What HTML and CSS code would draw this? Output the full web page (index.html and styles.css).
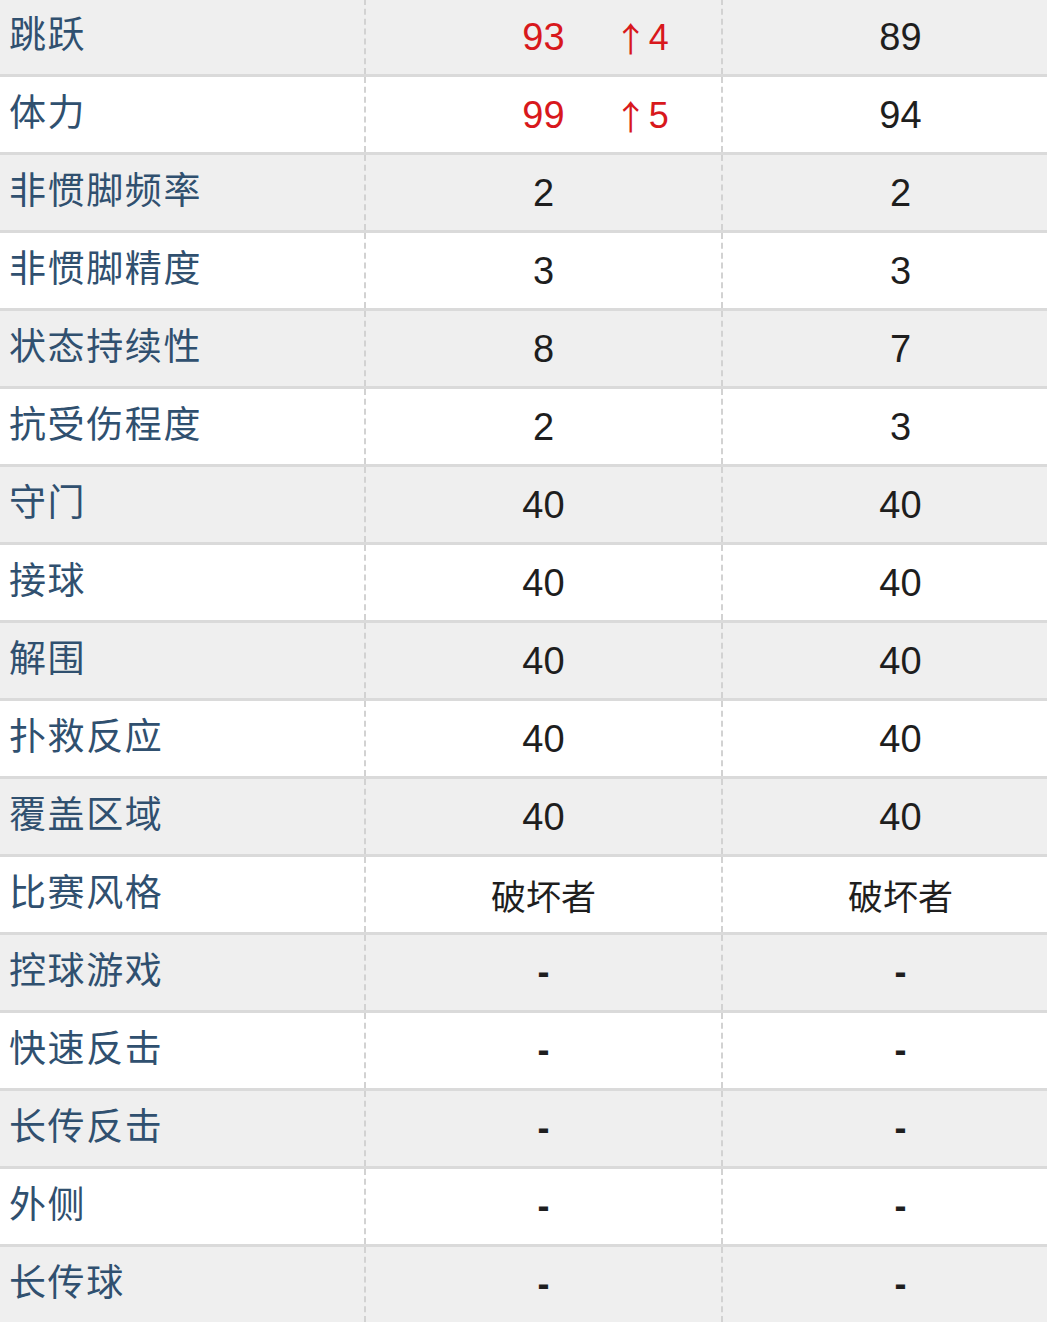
FILE: index.html
```html
<!DOCTYPE html>
<html lang="zh-CN">
<head>
<meta charset="utf-8">
<title>球员属性对比</title>
<link rel="stylesheet" href="styles.css">
</head>
<body>
<div class="table">
  <div class="row gray"><div class="label">跳跃</div><div class="val up"><span></span><span class="num red">93</span><span class="delta"><span class="arrow">↑</span>4</span></div><div class="val">89</div></div>
  <div class="row"><div class="label">体力</div><div class="val up"><span></span><span class="num red">99</span><span class="delta"><span class="arrow">↑</span>5</span></div><div class="val">94</div></div>
  <div class="row gray"><div class="label">非惯脚频率</div><div class="val">2</div><div class="val">2</div></div>
  <div class="row"><div class="label">非惯脚精度</div><div class="val">3</div><div class="val">3</div></div>
  <div class="row gray"><div class="label">状态持续性</div><div class="val">8</div><div class="val">7</div></div>
  <div class="row"><div class="label">抗受伤程度</div><div class="val">2</div><div class="val">3</div></div>
  <div class="row gray"><div class="label">守门</div><div class="val">40</div><div class="val">40</div></div>
  <div class="row"><div class="label">接球</div><div class="val">40</div><div class="val">40</div></div>
  <div class="row gray"><div class="label">解围</div><div class="val">40</div><div class="val">40</div></div>
  <div class="row"><div class="label">扑救反应</div><div class="val">40</div><div class="val">40</div></div>
  <div class="row gray"><div class="label">覆盖区域</div><div class="val">40</div><div class="val">40</div></div>
  <div class="row"><div class="label">比赛风格</div><div class="val cjk">破坏者</div><div class="val cjk">破坏者</div></div>
  <div class="row gray"><div class="label">控球游戏</div><div class="val dash">-</div><div class="val dash">-</div></div>
  <div class="row"><div class="label">快速反击</div><div class="val dash">-</div><div class="val dash">-</div></div>
  <div class="row gray"><div class="label">长传反击</div><div class="val dash">-</div><div class="val dash">-</div></div>
  <div class="row"><div class="label">外侧</div><div class="val dash">-</div><div class="val dash">-</div></div>
  <div class="row gray"><div class="label">长传球</div><div class="val dash">-</div><div class="val dash">-</div></div>
</div>
</body>
</html>
```
FILE: styles.css
```css
html, body {
  margin: 0;
  padding: 0;
  background: #ffffff;
  overflow: hidden;
}
body {
  width: 1047px;
  height: 1322px;
  font-family: "Liberation Sans", "Noto Sans CJK SC", sans-serif;
}
.table {
  margin-top: -1px;
  width: 1047px;
  overflow: hidden;
}
.row {
  display: grid;
  grid-template-columns: 364px 357px 357px;
  height: 78px;
  box-sizing: border-box;
  border-bottom: 3px solid #dadada;
  background: #ffffff;
}
.row.gray {
  background: #efefef;
}
.label {
  display: flex;
  align-items: center;
  padding-left: 9px;
  padding-bottom: 9px;
  font-family: "Noto Sans CJK SC", sans-serif;
  font-size: 37px;
  color: #30506f;
  letter-spacing: 1.6px;
}
.val {
  display: flex;
  align-items: center;
  justify-content: center;
  border-left: 2px dashed #d2d2d2;
  font-size: 38px;
  color: #1e1e1e;
  padding-top: 2px;
}
.val.up {
  display: grid;
  grid-template-columns: 1fr auto 1fr;
  align-items: center;
}
.num.red {
  color: #d8181c;
}
.delta {
  display: flex;
  align-items: center;
  color: #d8181c;
  padding-left: 57px;
  font-size: 36px;
}
.arrow {
  font-family: "Noto Sans CJK SC", sans-serif;
  font-size: 34px;
  margin-right: 1px;
  margin-left: -8px;
}
.val.cjk {
  font-family: "Noto Sans CJK SC", sans-serif;
  font-size: 35px;
  padding-bottom: 2px;
}
.val.dash {
  font-size: 36px;
  font-weight: bold;
  padding-bottom: 4px;
}
```
